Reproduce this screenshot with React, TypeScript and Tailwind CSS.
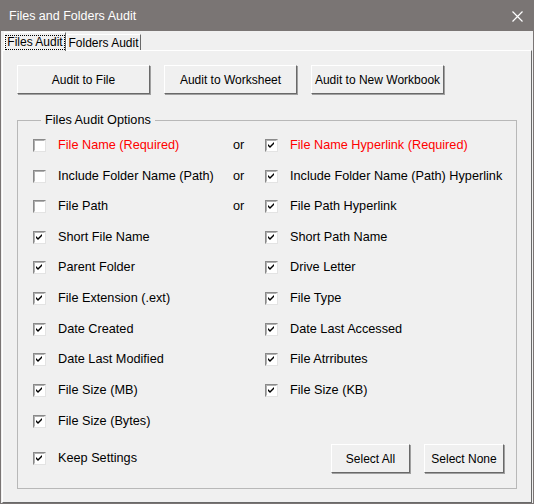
import React from "react";

const ROWS: { left?: string; leftOn?: boolean; or?: boolean; right?: string; red?: boolean }[] = [
  { left: "File Name (Required)", leftOn: false, or: true, right: "File Name Hyperlink (Required)", red: true },
  { left: "Include Folder Name (Path)", leftOn: false, or: true, right: "Include Folder Name (Path) Hyperlink" },
  { left: "File Path", leftOn: false, or: true, right: "File Path Hyperlink" },
  { left: "Short File Name", leftOn: true, right: "Short Path Name" },
  { left: "Parent Folder", leftOn: true, right: "Drive Letter" },
  { left: "File Extension (.ext)", leftOn: true, right: "File Type" },
  { left: "Date Created", leftOn: true, right: "Date Last Accessed" },
  { left: "Date Last Modified", leftOn: true, right: "File Atrributes" },
  { left: "File Size (MB)", leftOn: true, right: "File Size (KB)" },
  { left: "File Size (Bytes)", leftOn: true },
];

function Check({ on }: { on: boolean }) {
  return (
    <span className="flex h-[13px] w-[13px] shrink-0 border border-t-[#8a8a8a] border-l-[#8a8a8a] border-r-[#e3e3e3] border-b-[#e3e3e3] bg-white">
      <span className="flex h-full w-full items-center justify-center border border-t-[#b0b0b0] border-l-[#b0b0b0] border-r-white border-b-white">
        {on && (
          <svg width="7" height="7" viewBox="0 0 7 7">
            <path d="M0 2 L2 4 L6 0 L6 2 L2 6 L0 4 Z" fill="#000" />
          </svg>
        )}
      </span>
    </span>
  );
}

function Btn({ label, className }: { label: string; className: string }) {
  return (
    <button
      className={
        "flex items-center justify-center border border-t-white border-l-white border-r-[#696969] border-b-[#696969] bg-[#f0f0f0] text-[12px] text-black shadow-[1px_1px_0_#a0a0a0] " +
        className
      }
    >
      {label}
    </button>
  );
}

export default function App() {
  return (
    <div
      className="flex h-[504px] w-[534px] flex-col border border-[#7a7574] bg-[#f0f0f0] text-black"
      style={{ fontFamily: "'Liberation Sans', Arial, sans-serif" }}
    >
      <div className="flex h-[30px] shrink-0 items-center justify-between bg-[#7a7574] pl-[8px] pr-[10px] text-[12.5px] text-white">
        <span>Files and Folders Audit</span>
        <svg width="11" height="11" viewBox="0 0 11 11">
          <path d="M0.5 0.5 L10.5 10.5 M10.5 0.5 L0.5 10.5" stroke="#fff" strokeWidth="1.2" />
        </svg>
      </div>

      <div className="flex h-[19px] shrink-0 items-end pl-[3px] text-[12px]">
        <div className="relative z-10 -mb-px flex h-[19px] w-[62px] items-center justify-center border border-b-0 border-t-white border-l-white border-r-[#696969] bg-[#f0f0f0]">
          <span className="border border-dotted border-black px-[1px] leading-[13px]">Files Audit</span>
        </div>
        <div className="flex h-[16px] w-[75px] items-center justify-center border border-b-0 border-t-white border-l-white border-r-[#696969]">
          Folders Audit
        </div>
      </div>

      <div className="mx-[1px] flex flex-1 flex-col border border-t-white border-l-white border-r-[#696969] border-b-[#696969] px-[14px] pt-[14px]">
        <div className="flex gap-[14px]">
          <Btn label="Audit to File" className="h-[29px] w-[133px]" />
          <Btn label="Audit to Worksheet" className="h-[29px] w-[133px]" />
          <Btn label="Audit to New Workbook" className="h-[29px] w-[133px]" />
        </div>

        <fieldset className="mt-[17px] h-[378px] border border-[#b8b8b8] pl-[15px] pr-[12px] pb-[8px] text-[12.7px]">
          <legend className="ml-[8px] px-[4px] text-[12.7px]">Files Audit Options</legend>
          <div className="flex flex-col">
            {ROWS.map((r, i) => (
              <div key={i} className="grid h-[30.67px] grid-cols-[200px_32px_1fr] items-center whitespace-nowrap">
                <div className="flex items-center gap-[12px]">
                  <Check on={!!r.leftOn} />
                  <span className={r.red ? "text-[#ff0000]" : ""}>{r.left}</span>
                </div>
                <div>{r.or ? "or" : ""}</div>
                <div>
                  {r.right && (
                    <div className="flex items-center gap-[12px]">
                      <Check on />
                      <span className={r.red ? "text-[#ff0000]" : ""}>{r.right}</span>
                    </div>
                  )}
                </div>
              </div>
            ))}
            <div className="mt-[7px] flex h-[30px] items-center">
              <div className="flex flex-1 items-center gap-[12px]">
                <Check on />
                <span>Keep Settings</span>
              </div>
              <Btn label="Select All" className="mr-[14px] h-[29px] w-[79px]" />
              <Btn label="Select None" className="h-[29px] w-[80px]" />
            </div>
          </div>
        </fieldset>
      </div>
    </div>
  );
}
